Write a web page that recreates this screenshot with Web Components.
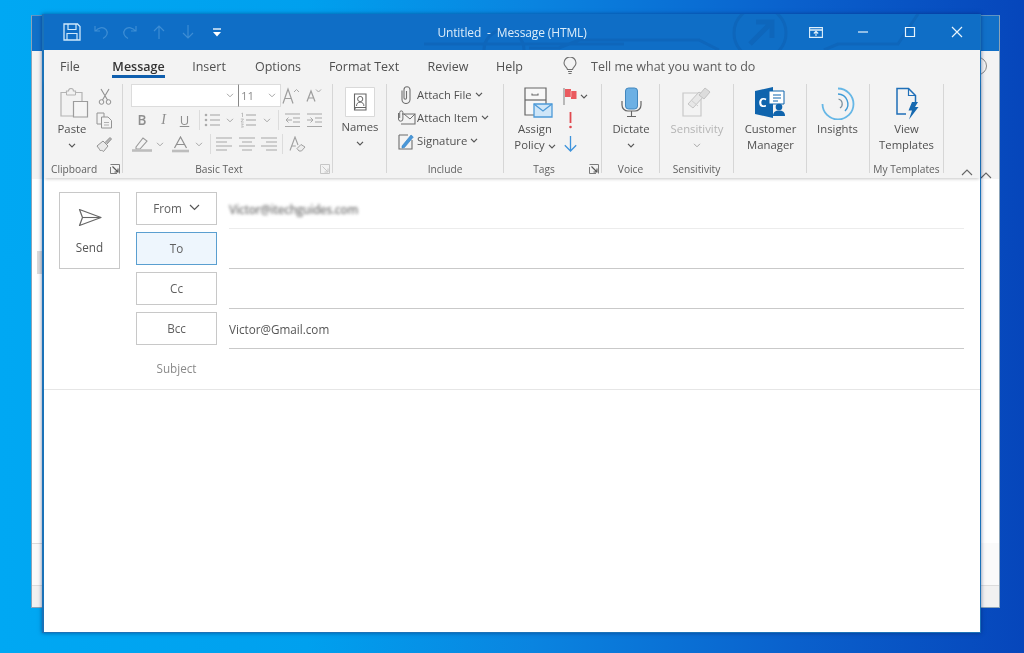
<!DOCTYPE html>
<html lang="en"><head><meta charset="utf-8"><title>Untitled - Message (HTML)</title>
<style>
html,body{margin:0;padding:0;width:1024px;height:653px;overflow:hidden}
body{font-family:"Open Sans","Liberation Sans",sans-serif}
</style></head><body>
<x-desktop>
  <x-back-window></x-back-window>
  <x-message-window>
    <x-titlebar></x-titlebar>
    <x-tabs></x-tabs>
    <x-ribbon>
      <x-group label="Clipboard" launcher="dark" w="79" lab-pad="0 27px 0 7px"><x-clipboard></x-clipboard></x-group>
      <x-group label="Basic Text" launcher="light" w="210" lab-pad="0 17px 0 0"><x-basic-text></x-basic-text></x-group>
      <x-group w="54"><x-big icon="names" ih="35" cw="54" chev="1">Names</x-big></x-group>
      <x-group label="Include" w="117"><x-include></x-include></x-group>
      <x-group label="Tags" launcher="dark" w="98" lab-pad="0 17px 0 0"><x-tags></x-tags></x-group>
      <x-group label="Voice" w="58"><x-big icon="mic" cw="58" chev="1">Dictate</x-big></x-group>
      <x-group label="Sensitivity" w="74"><x-big icon="sens" cw="74" chev="1" off="1">Sensitivity</x-big></x-group>
      <x-group w="73"><x-big icon="cm" cw="73">Customer<br>Manager</x-big></x-group>
      <x-group w="63"><x-big icon="insights" cw="61">Insights</x-big></x-group>
      <x-group label="My Templates" w="74"><x-big icon="tpl" cw="73">View<br>Templates</x-big></x-group>
      <x-collapse></x-collapse>
    </x-ribbon>
    <x-compose>
      <x-send></x-send>
      <x-fields>
        <x-row label="From" chev="1"><span class="blurred">Victor@itechguides.com</span></x-row>
        <x-row label="To" active="1"></x-row>
        <x-row label="Cc"></x-row>
        <x-row label="Bcc">Victor@Gmail.com</x-row>
        <x-row label="Subject" plain="1"></x-row>
      </x-fields>
    </x-compose>
  </x-message-window>
</x-desktop>
<style>
.blurred{filter:blur(1.4px);opacity:.8;display:inline-block;font-weight:600;letter-spacing:-.3px}
</style>
<script>
const G='#707070',L='#a8a8a8';
const s=(w,h,inner,extra='')=>`<svg xmlns="http://www.w3.org/2000/svg" width="${w}" height="${h}" viewBox="0 0 ${w} ${h}" fill="none" ${extra}>${inner}</svg>`;
const ICONS={
 save:s(18,18,`<path d="M1 1h13.500L17 3.500V17H1z" stroke="#cfe9fb" stroke-width="1.300"/><path d="M5 1v5.500h8V1M4 17v-6.500h10V17" stroke="#cfe9fb" stroke-width="1.200"/>`),
 undo:s(16,16,`<path d="M2 2v5h5M2.500 7C5 3.500 10 2.500 13 5.500c2.500 3 1 7-3 9" stroke="#3d8dd4" stroke-width="1.200"/>`),
 redo:s(16,16,`<path d="M14 2v5H9M13.500 7C11 3.500 6 2.500 3 5.500c-2.500 3-1 7 3 9" stroke="#3d8dd4" stroke-width="1.200"/>`),
 up:s(14,16,`<path d="M7 15V2M2 7l5-5 5 5" stroke="#3d8dd4" stroke-width="1.200"/>`),
 down:s(14,16,`<path d="M7 1v13M2 9l5 5 5-5" stroke="#3d8dd4" stroke-width="1.200"/>`),
 qat:s(10,9,`<path d="M1 1h8" stroke="#fff" stroke-width="1.300"/><path d="M1 4h8L5 8.500z" fill="#fff"/>`),
 display:s(14,11,`<path d="M.6.600h12.800v9.800H.6z" stroke="#dff0fb" stroke-width="1.100"/><path d="M.6 3h12.800" stroke="#dff0fb" stroke-width="1.500"/><path d="M7 9V4.500M4.800 6.500 7 4.300l2.200 2.200" stroke="#dff0fb" stroke-width="1.100"/>`),
 min:s(12,12,`<path d="M1 6h10" stroke="#e8f4fc" stroke-width="1.200"/>`),
 max:s(12,12,`<path d="M1.500 1.500h9v9h-9z" stroke="#e8f4fc" stroke-width="1.200"/>`),
 close:s(12,12,`<path d="M1 1l10 10M11 1 1 11" stroke="#e8f4fc" stroke-width="1.200"/>`),
 bulb:s(14,18,`<path d="M4.500 12.500C3.800 10 1 9.300 1 6a6 6 0 0 1 12 0c0 3.300-2.800 4-3.500 6.500z" stroke="${G}" stroke-width="1.100"/><path d="M5 14.500h4M5.500 16.500h3" stroke="${G}" stroke-width="1.100"/>`),
 chev:s(8,5,`<path d="M1 .8 4 3.800 7 .8" stroke="#555" stroke-width="1.200"/>`),
 chevl:s(8,5,`<path d="M1 .8 4 3.800 7 .8" stroke="#a6a6a6" stroke-width="1"/>`),
 paste:s(30,31,`<path d="M2 4.500h5.500V3h2a2.500 2.500 0 0 1 5 0h2v1.500H23V28H2z" fill="#f2f2f2" stroke="#b4b4b4" stroke-width="1.200"/><path d="M7.500 3v4h9V3" stroke="#b4b4b4"/><path d="M14.500 13.500h14V29h-14z" fill="#f5f5f5" stroke="#9c9c9c" stroke-width="1.200"/>`),
 cut:s(14,17,`<path d="M3 1l6.500 11M11 1 4.500 12" stroke="#909090" stroke-width="1.100"/><circle cx="3.500" cy="14" r="2.300" stroke="#909090"/><circle cx="10.500" cy="14" r="2.300" stroke="#909090"/>`),
 copy:s(17,17,`<path d="M1 1h7v11H1z" fill="#f3f3f3" stroke="#949494"/><path d="M5.500 5H12l3.500 3.500V16h-10z" fill="#f3f3f3" stroke="#949494"/><path d="M8 10.500h5M8 13h5" stroke="#b0b0b0"/>`),
 brush:s(17,16,`<path d="M1 10l6-5 5 5-4.500 5.500C6 14 5 14.500 4 14.500 3.500 13 2 11.500 1 10z" fill="#e9e9e9" stroke="#929292"/><path d="M9 6.500 14 1.500l1.500 1.500-4.500 5" fill="#b5b5b5" stroke="#929292"/>`),
 launchD:s(10,10,`<path d="M.5.500h9v9" stroke="#7c7c7c" fill="none"/><path d="M.5 3v6.500H7" stroke="#7c7c7c"/><path d="M2.500 2.500l5 5M8 4.500V8H4.500" stroke="#555" stroke-width="1.100"/>`),
 launchL:s(10,10,`<path d="M.5.500h9v9H.5z" stroke="#c6c6c6"/><path d="M2.500 2.500l5 5M8 4.500V8H4.500" stroke="#c6c6c6"/>`),
 growA:s(18,18,`<path d="M1 16.500 6 2l5 14.500M2.800 11.500h6.400" stroke="#9d9d9d" stroke-width="1.200"/><path d="M12 5l2.500-2.500L17 5" stroke="#a9a9a9"/>`),
 shrinkA:s(16,15,`<path d="M1 13.500 5 3l4 10.500M2.500 10h5" stroke="#9d9d9d" stroke-width="1.200"/><path d="M10 1.500l2.500 2.500L15 1.500" stroke="#a9a9a9"/>`),
 bullets:s(16,16,`<g fill="#ababab"><circle cx="2" cy="3" r="1.300"/><circle cx="2" cy="8" r="1.300"/><circle cx="2" cy="13" r="1.300"/></g><path d="M6 3h10M6 8h10M6 13h10" stroke="#a3a3a3" stroke-width="1.100"/>`),
 numbers:s(16,16,`<path d="M1.500 1.500 2.500 1v4M.8 7h2.700L1 10h2.700M1 12h2.400L2 13.500 3.500 15H1" stroke="#b0b0b0" stroke-width=".8"/><path d="M6 3h10M6 8h10M6 13h10" stroke="#a3a3a3" stroke-width="1.100"/>`),
 outdent:s(16,15,`<path d="M0 1h15M8 5h7M8 9h7M0 13.500h15" stroke="#a8a8a8" stroke-width="1.100"/><path d="M7 7H1M3.500 4.500 1 7l2.500 2.500" stroke="#a8a8a8"/>`),
 indent:s(16,15,`<path d="M0 1h15M8 5h7M8 9h7M0 13.500h15" stroke="#a8a8a8" stroke-width="1.100"/><path d="M0 7h6M3.500 4.500 6 7 3.500 9.500" stroke="#a8a8a8"/>`),
 highlight:s(20,17,`<path d="M4 11 11 2l4 3-7 8H4z" stroke="#9a9a9a" stroke-width="1.100"/><path d="M0 14.500h20" stroke="#bdbdbd" stroke-width="2.600"/>`),
 fontA:s(17,17,`<path d="M2.500 12 8.500 1l6 11M4.700 8.500h7.600" stroke="#8f8f8f" stroke-width="1.200"/><path d="M0 15h17" stroke="#bdbdbd" stroke-width="2.600"/>`),
 al:s(16,15,`<path d="M0 1h16M0 5h11M0 9h16M0 13h11" stroke="#a8a8a8" stroke-width="1.200"/>`),
 ac:s(16,15,`<path d="M0 1h16M3 5h10M0 9h16M3 13h10" stroke="#a8a8a8" stroke-width="1.200"/>`),
 ar:s(16,15,`<path d="M0 1h16M5 5h11M0 9h16M5 13h11" stroke="#a8a8a8" stroke-width="1.200"/>`),
 clearf:s(17,16,`<path d="M1 14.500 6 1l3 8" stroke="#a0a0a0" stroke-width="1.100"/><path d="M2.800 10h4" stroke="#a0a0a0"/><path d="M8 12.500 12 8.500l4 2.500-3.500 4H10z" fill="#ededed" stroke="#a0a0a0"/>`),
 names:s(30,30,`<path d="M.5.500h29v29H.5z" fill="#fff" stroke="#d9d9d9"/><path d="M9.500 7h11.500v16H9.500z" stroke="#666" stroke-width="1.100"/><path d="M9.500 20.500h11.500M9.500 23c0-1.500 1-2.500 2-2.500" stroke="#666"/><circle cx="15.200" cy="12" r="2.600" stroke="#666"/><path d="M11.500 19c0-2.500 1.500-3.800 3.700-3.800s3.700 1.300 3.700 3.800" stroke="#666"/>`),
 clip:s(14,18,`<path d="M3 4.500v9a4 4 0 0 0 8 0V3.800a3 3 0 0 0-6 0V12a1 1 0 0 0 2.500 0V5" stroke="#6f6f6f" stroke-width="1.100"/>`),
 attachItem:s(19,15,`<path d="M5 4h13v10H4" stroke="#6f6f6f" stroke-width="1.100"/><path d="M7 4l6 5 5-5" stroke="#6f6f6f"/><path d="M1.500 3v6a2.200 2.200 0 0 0 4.400 0V2.500a1.600 1.600 0 0 0-3.200 0V8" stroke="#6f6f6f" stroke-width="1"/>`),
 sign:s(16,18,`<path d="M1 3h9M1 3v14h13V8" stroke="#6d6d6d" stroke-width="1.100"/><path d="M4 14l9-11 2.300 2L6.500 15.500 4 16z" fill="#4a97d8" stroke="#2f7fc4" stroke-width=".6"/>`),
 policy:s(29,32,`<path d="M1 1h21v27H1z" fill="#f7f7f7" stroke="#666" stroke-width="1.200"/><path d="M1 13h21" stroke="#666" stroke-width="1.200"/><path d="M8 6.500v1.500h6V6.500" stroke="#666" stroke-width="1.100"/><path d="M10 17h18v13H10z" fill="#cfe6f8" stroke="#4d9ad8" stroke-width="1.300"/><path d="M10 17l9 7 9-7" stroke="#4d9ad8" stroke-width="1.300"/>`),
 flag:s(14,17,`<path d="M1 0v17" stroke="#999" stroke-width="1.300"/><path d="M2 1h6v2h5.500v8H8V9H2z" fill="#ea5a5f"/><path d="M8 3v6" stroke="#f6a5a8" stroke-width="1"/>`),
 bang:s(5,17,`<path d="M2.500 0v11" stroke="#e0484e" stroke-width="1.800"/><circle cx="2.500" cy="15" r="1.300" fill="#e0484e"/>`),
 darrow:s(13,16,`<path d="M6.500 0v15M.8 9.300l5.700 5.700 5.700-5.700" stroke="#3d93dc" stroke-width="1.300"/>`),
 mic:s(21,32,`<rect x="4.500" y="1" width="12" height="21" rx="3" fill="#6cb0e4" stroke="#4186bd"/><path d="M1 14v4a6 6 0 0 0 6 6h7a6 6 0 0 0 6-6v-4" stroke="#666" stroke-width="1.200"/><path d="M10.500 24v5M6 29.500h9" stroke="#666" stroke-width="1.100"/>`),
 sens:s(30,31,`<path d="M1 6h18v23H1z" fill="#f3f3f3" stroke="#c8c8c8" stroke-width="1.200"/><path d="M6 17 17 5l5 4-11 12z" fill="#e7e7e7" stroke="#c4c4c4"/><path d="M9 13l7 6" stroke="#cecece"/><path d="M17 8l6-7 5 4-6 7z" fill="#dcdcdc" stroke="#c2c2c2"/>`),
 cm:s(31,31,`<path d="M0 4 18 0v31L0 27z" fill="#0f64ad"/><path d="M14 4h15v13H14z" fill="#fff" stroke="#0f64ad" stroke-width="1"/><path d="M18 8h8M18 11h8M18 14h5" stroke="#0f64ad"/><text x="3.500" y="20" fill="#fff" font-size="13" font-weight="700" font-family="Open Sans,Liberation Sans,sans-serif">C</text><circle cx="24" cy="20" r="3.300" fill="#0f64ad"/><path d="M18 29c0-4 2.500-5.500 6-5.500s6 1.500 6 5.500z" fill="#0f64ad"/>`),
 insights:s(34,33,`<g stroke="#66b7e6" fill="none"><path d="M17 1.500A15.500 15.500 0 1 1 1.500 17" stroke-width="1.800"/><path d="M17 7a10 10 0 0 1 7 17" stroke-width="1.400" stroke="#3f9bd6"/><path d="M17.500 12a5 5 0 0 1 1.500 9" stroke-width="1.200" stroke="#7a8f9c"/></g>`),
 tpl:s(24,33,`<path d="M11 27H2V1.500h11.500l7 7V15" stroke="#1f6fb8" stroke-width="1.500"/><path d="M13.500 1.500v7h7" stroke="#1f6fb8" stroke-width="1.200"/><path d="M17 15h6l-3 5h3.500L14 32.500l3-9h-3.500z" fill="#1669b0"/>`),
 send:s(24,19,`<path d="M1.500 1.500 23 9.500 1.500 17.500 4.500 9.500z" stroke="#666" stroke-width="1.200" stroke-linejoin="round"/><path d="M4.500 9.500H23" stroke="#666" stroke-width="1.100"/>`),
 chevMed:s(11,7,`<path d="M1 1l4.500 4.500L10 1" stroke="#555" stroke-width="1.200"/>`),
 collapse:s(12,7,`<path d="M1 6l5-5 5 5" stroke="#666" stroke-width="1.100"/>`),
};
function def(name,html){
  customElements.define(name,class extends HTMLElement{
    constructor(){super();this.attachShadow({mode:'open'});}
    connectedCallback(){
      this.shadowRoot.innerHTML=typeof html==='function'?html(this):html;
    }
  });
}
def('x-icon',el=>`<style>:host{display:inline-flex;align-items:center;justify-content:center;flex:none;width:${el.getAttribute('w')?el.getAttribute('w')+'px':'auto'}}svg{display:block}</style>${ICONS[el.getAttribute('name')]||''}`);
def('x-desktop',`<style>:host{display:block;position:relative;width:1024px;height:653px;overflow:hidden;background:linear-gradient(90deg,#00a8f3 0%,#00a0ee 30%,#0a84e0 52%,#0a60cc 78%,#0646bb 100%);filter:blur(.3px)}</style><slot></slot>`);
def('x-back-window',`<style>
:host{position:absolute;left:31px;top:15px;width:967px;height:591px;display:flex;flex-direction:column;border:1px solid #8ba3b8;border-top-color:#5f93c4;background:#fff;overflow:hidden}
.t{height:35px;background:#1170c8;flex:none}
.r{height:128px;background:#f3f3f3;flex:none;display:flex;justify-content:flex-end;align-items:flex-end;position:relative}
.arc{position:absolute;right:12px;top:6px;width:16px;height:16px;border:1px solid #888;border-radius:50%}
.c{height:14px;padding:0 7px 3px 0}
.b{flex:1;display:flex;flex-direction:column;background:#fff}
.gap1{height:72px}.thing{height:23px;width:6px;margin-left:5px;background:#dcdcdc}
.f1{flex:1}
.m{height:42px;flex:none;background:linear-gradient(#dcdcdc,#dcdcdc) 0 0/11px 1px no-repeat #fafafa}
.s{height:21px;background:#f1f1f1;flex:none;border-top:1px solid #dcdcdc}
</style><div class="t"></div><div class="r"><i class="arc"></i><div class="c"><x-icon name="collapse"></x-icon></div></div>
<div class="b"><div class="gap1"></div><div class="thing"></div><div class="f1"></div></div>
<div class="m"></div><div class="s"></div>`);
def('x-message-window',`<style>
:host{position:absolute;left:42px;top:14px;width:936px;height:618px;display:flex;flex-direction:column;background:#fff;border:solid #1b72b8;border-width:0 1px 1px 2px;box-shadow:0 0 4px rgba(0,30,90,.55)}
</style><slot></slot>`);
def('x-titlebar',`<style>
:host{display:grid;grid-template-columns:1fr auto 1fr;align-items:center;height:36px;flex:none;position:relative;background:#0f6ec6;color:#dcedfa;font-size:12px;overflow:hidden}
.art{position:absolute;inset:0}
.q{display:flex;padding-left:13px;position:relative}
.q x-icon{width:29px;height:24px}
.title{white-space:pre;position:relative;letter-spacing:-.13px}
.c{display:flex;justify-content:flex-end;position:relative}
.c x-icon{width:47px;height:30px}
</style>
<svg class="art" width="936" height="36" viewBox="0 0 936 36" fill="none" stroke="#0e66bb" stroke-width="3"><circle cx="716" cy="19" r="26"/><path d="M706 30 728 8M712 8h16v16" stroke-width="5"/><path d="M780 36l14-6h60l20-30M440 36a20 20 0 0 1 40 0M485 34h30l20-8h120l20 10M380 30h200" /></svg>
<div class="q"><x-icon name="save"></x-icon><x-icon name="undo"></x-icon><x-icon name="redo"></x-icon><x-icon name="up"></x-icon><x-icon name="down"></x-icon><x-icon name="qat"></x-icon></div>
<div class="title">Untitled  -  Message (HTML)</div>
<div class="c"><x-icon name="display"></x-icon><x-icon name="min"></x-icon><x-icon name="max"></x-icon><x-icon name="close"></x-icon></div>`);
def('x-tabs',`<style>
:host{display:flex;height:30px;flex:none;background:#f3f3f3;color:#505050;font-size:12.5px;align-items:stretch;position:relative;z-index:1}
.t{display:flex;justify-content:center;align-items:center;padding-top:2px;box-sizing:border-box}
.a{color:#333;font-weight:600}
.a span{position:relative;display:block}
.a span::after{content:"";position:absolute;left:0;right:0;bottom:-3px;height:3px;background:#0f5fae}
.tell{display:flex;align-items:center;padding-top:2px;margin-left:31px;gap:14px;color:#5a5a5a}
</style>
<div class="t" style="width:52px"><span>File</span></div>
<div class="t a" style="width:85px"><span>Message</span></div>
<div class="t" style="width:56px"><span>Insert</span></div>
<div class="t" style="width:82px"><span>Options</span></div>
<div class="t" style="width:90px"><span>Format Text</span></div>
<div class="t" style="width:78px"><span>Review</span></div>
<div class="t" style="width:45px"><span>Help</span></div>
<div class="tell"><x-icon name="bulb"></x-icon><span>Tell me what you want to do</span></div>`);
def('x-ribbon',`<style>
:host{display:flex;height:98px;flex:none;background:#f3f3f3;color:#505050;font-size:11.3px;padding-top:4px;box-sizing:border-box;position:relative;box-shadow:0 2px 3px -1px rgba(0,0,0,.22)}
</style><slot></slot>`);
def('x-group',el=>{const l=el.getAttribute('label')||'',lc=el.getAttribute('launcher');return `<style>
:host{display:flex;flex-direction:column;width:${el.getAttribute('w')}px;height:89px;box-sizing:border-box;border-right:1px solid #d6d6d6;flex:none;position:relative}
.c{flex:1;display:flex;min-height:0}
.l{height:15px;line-height:15px;font-size:10.2px;text-align:center;color:#606060;padding:${el.getAttribute('lab-pad')||0};white-space:nowrap;position:relative;top:4px}
.lc{position:absolute;right:2px;bottom:-1px;display:flex}
</style><div class="c"><slot></slot></div><div class="l">${l}</div>${lc?`<div class="lc"><x-icon name="${lc==='dark'?'launchD':'launchL'}"></x-icon></div>`:''}`});
def('x-big',el=>{const ih=el.getAttribute('ih')||37,off=el.hasAttribute('off'),chev=el.hasAttribute('chev');return `<style>
:host{display:flex;flex-direction:column;align-items:center;width:${el.getAttribute('cw')}px;flex:none;line-height:16px;text-align:center;color:${off?'#b4b4b4':'#505050'};font-size:11.3px}
.i{height:${ih}px;padding-top:3px;box-sizing:border-box;display:flex;align-items:flex-start;justify-content:center;flex:none}
.n{white-space:nowrap}
.ch{height:16px;display:flex;align-items:center}
</style><div class="i"><x-icon name="${el.getAttribute('icon')}"></x-icon></div><div class="n"><slot></slot></div>${chev?`<div class="ch"><x-icon name="${off?'chevl':'chev'}"></x-icon></div>`:''}`});
def('x-clipboard',`<style>
:host{display:flex;padding-left:8px}
.p{width:40px;display:flex;flex-direction:column;align-items:center;line-height:16px;font-size:11.3px}
.i{height:37px;padding-top:4px;box-sizing:border-box;padding-left:4px}
.ch{height:16px;display:flex;align-items:center}
.s{width:25px;display:flex;flex-direction:column}
.s x-icon{height:24px}
</style><div class="p"><div class="i"><x-icon name="paste"></x-icon></div><div>Paste</div><div class="ch"><x-icon name="chev"></x-icon></div></div>
<div class="s"><x-icon name="cut"></x-icon><x-icon name="copy"></x-icon><x-icon name="brush"></x-icon></div>`);
def('x-basic-text',`<style>
:host{display:flex;flex-direction:column;padding-left:8px;color:#8d8d8d;font-size:11.5px}
.r{display:flex;align-items:center;height:24px}
.r1{height:23px;margin-bottom:1px}
.box{height:23px;background:#fff;border:1px solid #dcdcdc;box-sizing:border-box;display:flex;align-items:center;justify-content:flex-end;padding-right:4px}
.sz{justify-content:space-between;padding:0 4px 0 2px;margin-left:-1px;border-left-color:#888}
.fmt{width:22px;text-align:center;font-size:12px;color:#8e8e8e;flex:none}
.sep{width:1px;height:20px;background:#dcdcdc;flex:none}
</style>
<div class="r r1"><div class="box" style="width:108px"><x-icon name="chevl"></x-icon></div><div class="box sz" style="width:43px"><span>11</span><x-icon name="chevl"></x-icon></div><x-icon name="growA" w="22" style="margin-left:-1px"></x-icon><x-icon name="shrinkA" w="24"></x-icon></div>
<div class="r"><span class="fmt" style="font-weight:600;font-size:13.5px">B</span><span class="fmt" style="width:21px;font-style:italic;font-family:'Liberation Serif',serif;font-size:14px">I</span><span class="fmt" style="width:21px;text-decoration:underline;font-size:13px">U</span><span style="width:4px"></span><i class="sep"></i><x-icon name="bullets" w="24"></x-icon><x-icon name="chevl" w="12"></x-icon><x-icon name="numbers" w="24"></x-icon><x-icon name="chevl" w="14"></x-icon><i class="sep" style="margin-left:4px"></i><x-icon name="outdent" w="28"></x-icon><x-icon name="indent" w="16"></x-icon></div>
<div class="r"><x-icon name="highlight" w="22"></x-icon><x-icon name="chevl" w="14"></x-icon><x-icon name="fontA" w="26"></x-icon><x-icon name="chevl" w="12"></x-icon><span style="width:5px"></span><i class="sep"></i><x-icon name="al" w="25"></x-icon><x-icon name="ac" w="22"></x-icon><x-icon name="ar" w="21"></x-icon><span style="width:3px"></span><i class="sep"></i><x-icon name="clearf" w="28"></x-icon></div>`);
def('x-include',`<style>
:host{display:flex;flex-direction:column;padding:0 0 0 9px;font-size:11.3px;color:#505050;margin-top:-1px}
.r{display:flex;align-items:center;height:23px;white-space:nowrap}
x-icon.i{width:20px;margin-right:1px}
x-icon.c{margin-left:3px}
</style>
<div class="r"><x-icon class="i" name="clip"></x-icon><span>Attach File</span><x-icon class="c" name="chev"></x-icon></div>
<div class="r"><x-icon class="i" name="attachItem"></x-icon><span>Attach Item</span><x-icon class="c" name="chev"></x-icon></div>
<div class="r"><x-icon class="i" name="sign"></x-icon><span>Signature</span><x-icon class="c" name="chev"></x-icon></div>`);
def('x-tags',`<style>
:host{display:flex;font-size:11.3px;color:#505050}
.p{width:59px;display:flex;flex-direction:column;align-items:flex-start;line-height:16px;flex:none}
.i{height:37px;padding:3px 0 0 20px;box-sizing:border-box}
.as{width:62px;text-align:center}
.s{display:flex;flex-direction:column}
.rw{height:24px;display:flex;align-items:center;gap:3px}
.rw x-icon:first-child{width:14px}
</style><div class="p"><div class="i"><x-icon name="policy"></x-icon></div><div class="as">Assign</div><div class="as">Policy <x-icon name="chev"></x-icon></div></div>
<div class="s"><div class="rw"><x-icon name="flag"></x-icon><x-icon name="chev"></x-icon></div><div class="rw"><x-icon name="bang"></x-icon></div><div class="rw"><x-icon name="darrow"></x-icon></div></div>`);
def('x-collapse',`<style>:host{position:absolute;left:917px;bottom:2px;display:flex}</style><x-icon name="collapse"></x-icon>`);
def('x-compose',`<style>
:host{display:flex;align-items:flex-start;padding:14px 16px 0 15px;flex:none;height:212px;box-sizing:border-box;border-bottom:1px solid #e6e6e6;color:#555;font-size:11.7px;gap:16px}
</style><slot></slot>`);
def('x-send',`<style>
:host{display:flex;flex-direction:column;align-items:center;width:61px;height:77px;box-sizing:border-box;border:1px solid #c8c8c8;flex:none;padding-top:15px;gap:12px;color:#555;font-size:11.7px}
</style><x-icon name="send"></x-icon><span>Send</span>`);
def('x-fields',`<style>:host{flex:1;display:flex;flex-direction:column;min-width:0}</style><slot></slot>`);
def('x-row',el=>{const plain=el.hasAttribute('plain'),act=el.hasAttribute('active'),ch=el.hasAttribute('chev'),lab=el.getAttribute('label');return `<style>
:host{display:flex;height:40px;gap:12px;flex:none;font-size:11.7px;color:#555}
.b{width:81px;height:33px;box-sizing:border-box;border:1px solid ${plain?'transparent':act?'#5a9fd0':'#c8c8c8'};background:${act?'#eef6fd':'transparent'};display:flex;align-items:center;justify-content:center;gap:7px;flex:none;padding-bottom:2px;color:${plain?'#8a8a8a':'#606060'}}
.f{flex:1;height:37px;box-sizing:border-box;border-bottom:1px solid ${plain?'transparent':ch?'#ececec':'#c9c9c9'};display:flex;align-items:center;min-width:0;padding-bottom:3px}
</style><div class="b"><span>${lab}</span>${ch?'<x-icon name="chevMed"></x-icon>':''}</div><div class="f"><slot></slot></div>`});
</script>
</body></html>
